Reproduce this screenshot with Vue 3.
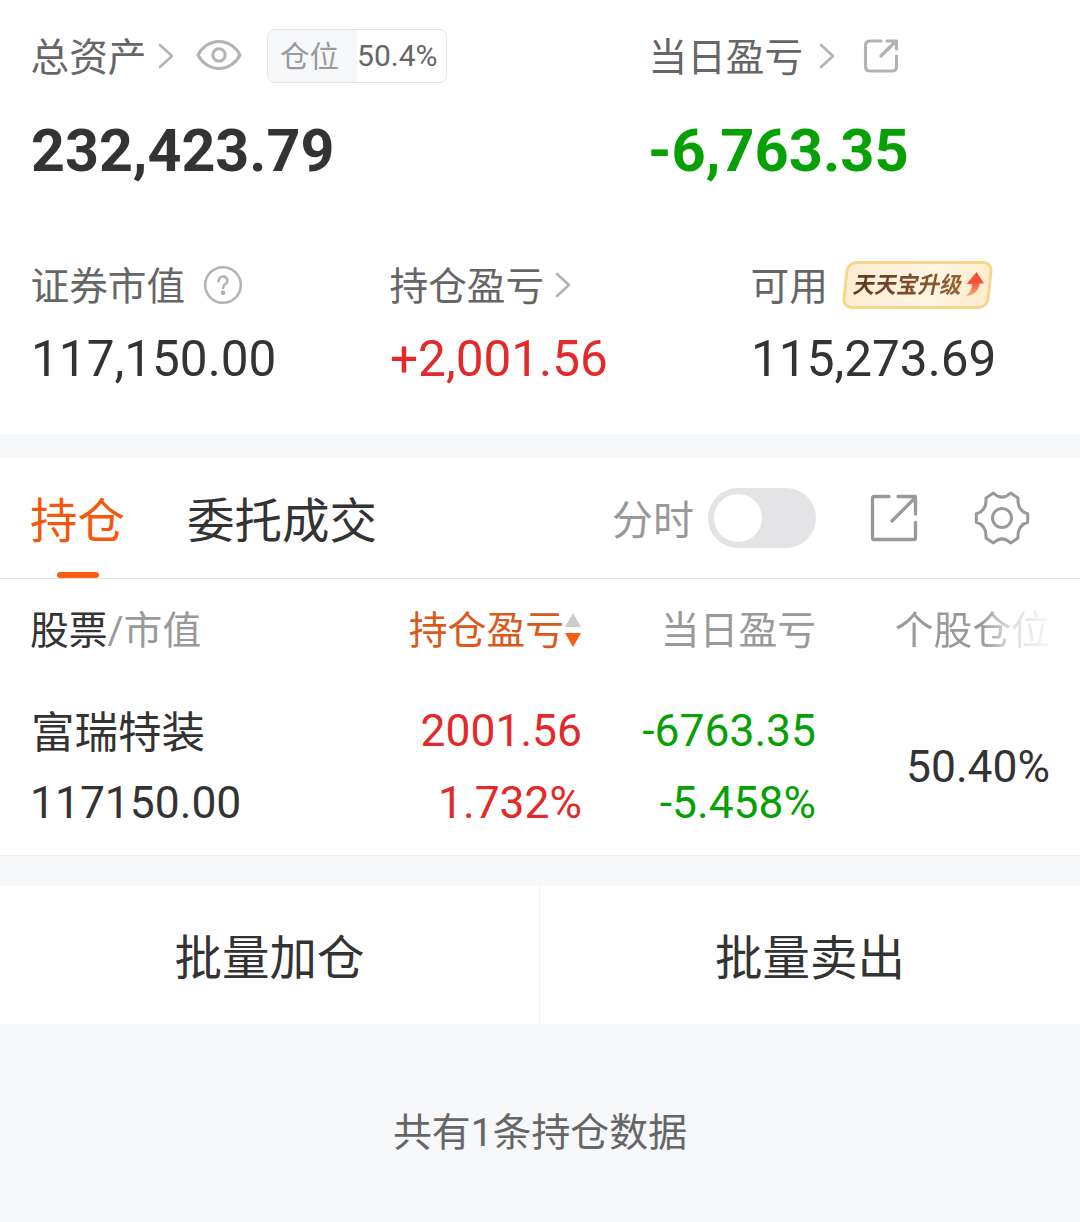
<script setup>
const rows = [
  { name: '富瑞特装', value: '117150.00', profit: '2001.56', profitRate: '1.732%', day: '-6763.35', dayRate: '-5.458%', position: '50.40%' },
]
</script>

<template>
  <div class="page">
    <section class="summary">
      <div class="top">
        <div class="total">
          <div class="line tall">
            <span class="label">总资产</span>
            <svg class="chev c1" width="16" height="26" viewBox="0 0 16 26"><path d="M2 2 14 13 2 24" /></svg>
            <svg class="eye" width="46" height="32" viewBox="0 0 46 32">
              <path d="M2 16C6 8 14 2.500 23 2.500S40 8 44 16C40 24 32 29.500 23 29.500S6 24 2 16Z" />
              <circle cx="23" cy="16" r="6.200" />
            </svg>
            <div class="chip"><span class="chip-name">仓位</span><span class="chip-val">50.4%</span></div>
          </div>
          <div class="big">232,423.79</div>
        </div>
        <div>
          <div class="line tall">
            <span class="label">当日盈亏</span>
            <svg class="chev c2" width="16" height="26" viewBox="0 0 16 26"><path d="M2 2 14 13 2 24" /></svg>
            <svg class="share" width="36" height="36" viewBox="0 0 36 36">
              <path d="M18 3H7Q2.500 3 2.500 7.500V28.500Q2.500 33 7 33H29Q33.500 33 33.500 28.500V18M18 18 32.500 3.500M24 3H33.500V11" />
            </svg>
          </div>
          <div class="big green day-total">-6,763.35</div>
        </div>
      </div>
      <div class="bottom">
        <div>
          <div class="line">
            <span class="label">证券市值</span>
            <svg class="help" width="40" height="40" viewBox="0 0 40 40">
              <circle cx="20" cy="20" r="17.800" />
              <path d="M15.500 16.500C15.500 10 24.500 10 24.500 15.500C24.500 19 20 19 20 23" />
              <circle class="dot" cx="20" cy="27.800" r="2.300" />
            </svg>
          </div>
          <div class="mid">117,150.00</div>
        </div>
        <div>
          <div class="line">
            <span class="label">持仓盈亏</span>
            <svg class="chev c3" width="16" height="26" viewBox="0 0 16 26"><path d="M2 2 14 13 2 24" /></svg>
          </div>
          <div class="mid red">+2,001.56</div>
        </div>
        <div>
          <div class="line">
            <span class="label usable">可用</span>
            <div class="promo">
              <span class="promo-text">天天宝升级</span>
              <svg width="20" height="26" viewBox="0 0 20 26">
                <defs><linearGradient id="arrow" x1="0" y1="0" x2="0" y2="1"><stop offset="0.400" stop-color="#f4503a" /><stop offset="1" stop-color="#fba878" /></linearGradient></defs>
                <path fill="url(#arrow)" d="M11.500 1 19 12.500H14.500C14 19 9 24.500 1 25C5 21.500 7 17.500 7 13H1.500Z" />
              </svg>
            </div>
          </div>
          <div class="mid">115,273.69</div>
        </div>
      </div>
    </section>

    <nav class="tabs">
      <div class="tab active">持仓</div>
      <div class="tab second">委托成交</div>
      <span class="minute">分时</span>
      <div class="toggle"><i></i></div>
      <svg class="export" width="48" height="48" viewBox="0 0 48 48">
        <path d="M19 2.500H4Q2.500 2.500 2.500 4V44Q2.500 45.500 4 45.500H44Q45.500 45.500 45.500 44V28.500M22 27 45 4M28 2.500H45.500V20" />
      </svg>
      <svg class="gear" width="56" height="56" viewBox="-28 -28 56 56">
        <path d="M-8.700-25Q0-16.600 8.700-25L16-20C15.500-11 19-6 25.700-4.200V4.200C19 6 15.500 11 16 20L8.700 25Q0 16.600-8.700 25L-16 20C-15.500 11-19 6-25.700 4.200V-4.200C-19-6-15.500-11-16-20Z" />
        <circle r="9.500" />
      </svg>
    </nav>

    <section class="table">
      <div class="grid head">
        <div class="stock"><b>股票</b>/市值</div>
        <div class="sorted">持仓盈亏<svg width="18" height="36" viewBox="0 0 18 36"><path fill="#ccc" d="M9 0 17 14H1Z" /><path fill="#f95c12" d="M1 20H17L9 34Z" /></svg></div>
        <div>当日盈亏</div>
        <div class="fade">个股仓位</div>
      </div>
      <div v-for="r in rows" :key="r.name" class="grid body">
        <div class="first"><p class="name">{{ r.name }}</p><p>{{ r.value }}</p></div>
        <div class="red"><p>{{ r.profit }}</p><p>{{ r.profitRate }}</p></div>
        <div class="green"><p>{{ r.day }}</p><p>{{ r.dayRate }}</p></div>
        <div>{{ r.position }}</div>
      </div>
    </section>

    <div class="actions">
      <div>批量加仓</div>
      <div>批量卖出</div>
    </div>
    <footer>共有1条持仓数据</footer>
  </div>
</template>

<style>
body { margin: 0; background: #f7f8fa; }
</style>

<style scoped>
.page { width: 1080px; height: 1222px; overflow: hidden; background: #f7f8fa; color: #333; font-family: Roboto, "Noto Sans CJK SC", sans-serif; white-space: nowrap; }
svg { display: block; flex: none; fill: none; stroke-linecap: round; stroke-linejoin: round; }
p { margin: 0; }
.red { color: #e32a2a; }
.green { color: #07a007; }
.summary { height: 434px; background: #fff; box-sizing: border-box; padding: 29px 0 0 31px; }
.top { display: grid; grid-template-columns: 618px 1fr; }
.bottom { display: grid; grid-template-columns: 359px 361px 1fr; margin-top: 75px; }
.line { display: flex; align-items: center; height: 48px; }
.line.tall { height: 54px; }
.label { padding-top: 3px; margin-left: -.5px; font-size: 38.700px; line-height: 48px; color: #666; }
.chev { stroke: #b3b3b3; stroke-width: 2.600; }
.c1 { margin-left: 11px; }
.c2 { margin-left: 16px; }
.c3 { margin-left: 11px; }
.eye { margin-left: 22.500px; margin-top: -3px; stroke: #b3b3b3; stroke-width: 3; }
.chip { display: flex; box-sizing: border-box; width: 180px; height: 54px; margin-left: 25px; border: 1px solid #e4e4e6; border-radius: 8px; overflow: hidden; line-height: 52px; }
.chip-name { width: 77px; padding-left: 12px; background: #f7f8fa; color: #999; font-size: 29.500px; line-height: 54px; }
.chip-val { padding-left: 0; color: #666; font-size: 30px; }
.share { margin-left: 28px; stroke: #b3b3b3; stroke-width: 3.200; }
.help { margin-left: 18px; stroke: #b3b3b3; stroke-width: 2.600; }
.help .dot { fill: #b3b3b3; stroke: none; }
.big { height: 70px; margin-top: 33px; font-size: 59.200px; font-weight: 700; line-height: 70px; }
.day-total { margin-left: -1px; font-size: 59.600px; }
.mid { height: 60px; margin-top: 20px; font-size: 49.500px; line-height: 60px; }
.usable { width: 75px; }
.promo { display: flex; align-items: center; box-sizing: border-box; width: 147px; height: 48px; margin-left: 18.500px; padding-left: 7px; border: 3px solid #f5d68c; border-radius: 10px; background: linear-gradient(100deg, #fdebd2, #fff6e4 60%, #fdeccb); transform: skewX(-6deg); }
.promo-text { padding-top: 2px; font-size: 21.700px; font-weight: 700; line-height: 42px; transform: skewX(-6deg) scaleY(1.06); background: linear-gradient(90deg, #5e3820, #9a6235); -webkit-background-clip: text; background-clip: text; color: transparent; }
.promo svg { margin-left: 3px; margin-top: -3px; transform: skewX(6deg); }
.tabs { display: flex; align-items: center; height: 120px; margin-top: 24px; padding-left: 30px; background: #fff; border-bottom: 1px solid #e1e1e1; }
.tab { position: relative; height: 120px; font-size: 47.500px; line-height: 128px; }
.active { color: #f2590c; }
.active::after { content: ""; position: absolute; left: 27px; bottom: 0; width: 42px; height: 6px; border-radius: 3px; background: #f95c12; }
.second { width: 190px; margin-left: 62px; }
.minute { width: 83px; margin-left: 235px; font-size: 41px; line-height: 50px; color: #999; margin-top: 6px; }
.toggle { box-sizing: border-box; width: 108px; height: 60px; margin-left: 13px; padding: 6px; border-radius: 30px; background: #e4e4e6; }
.toggle i { display: block; width: 48px; height: 48px; border-radius: 50%; background: #fff; }
.export { margin-left: 54px; stroke: #999; stroke-width: 3.300; }
.gear { margin-left: 56px; stroke: #999; stroke-width: 3; }
.table { height: 276px; background: #fff; border-bottom: 1px solid #ebecee; }
.grid { display: grid; grid-template-columns: 300px 252px 234px 234px; padding-left: 30px; text-align: right; }
.head { height: 100px; line-height: 104px; font-size: 38.800px; color: #999; }
.stock, .first { text-align: left; }
.stock b { font-weight: 400; color: #333; }
.sorted { display: flex; align-items: center; justify-content: flex-end; color: #d9591a; }
.fade { -webkit-mask-image: linear-gradient(90deg, #000 166px, rgba(0, 0, 0, .3) 196px, rgba(0, 0, 0, .1) 234px); mask-image: linear-gradient(90deg, #000 166px, rgba(0, 0, 0, .3) 196px, rgba(0, 0, 0, .1) 234px); }
.body { height: 144px; padding-top: 16px; align-items: center; font-size: 44.400px; line-height: 72px; }
.name { height: 72px; padding-left: 1px; font-size: 43.500px; line-height: 77px; }
.actions { display: grid; grid-template-columns: 539px 541px; height: 138px; margin-top: 30px; overflow: hidden; background: #fff; font-size: 47.500px; line-height: 146px; text-align: center; }
.actions div + div { border-left: 1px solid #f2f3f5; }
footer { padding-top: 84px; color: #666; font-size: 38.900px; line-height: 50px; text-align: center; }
</style>
